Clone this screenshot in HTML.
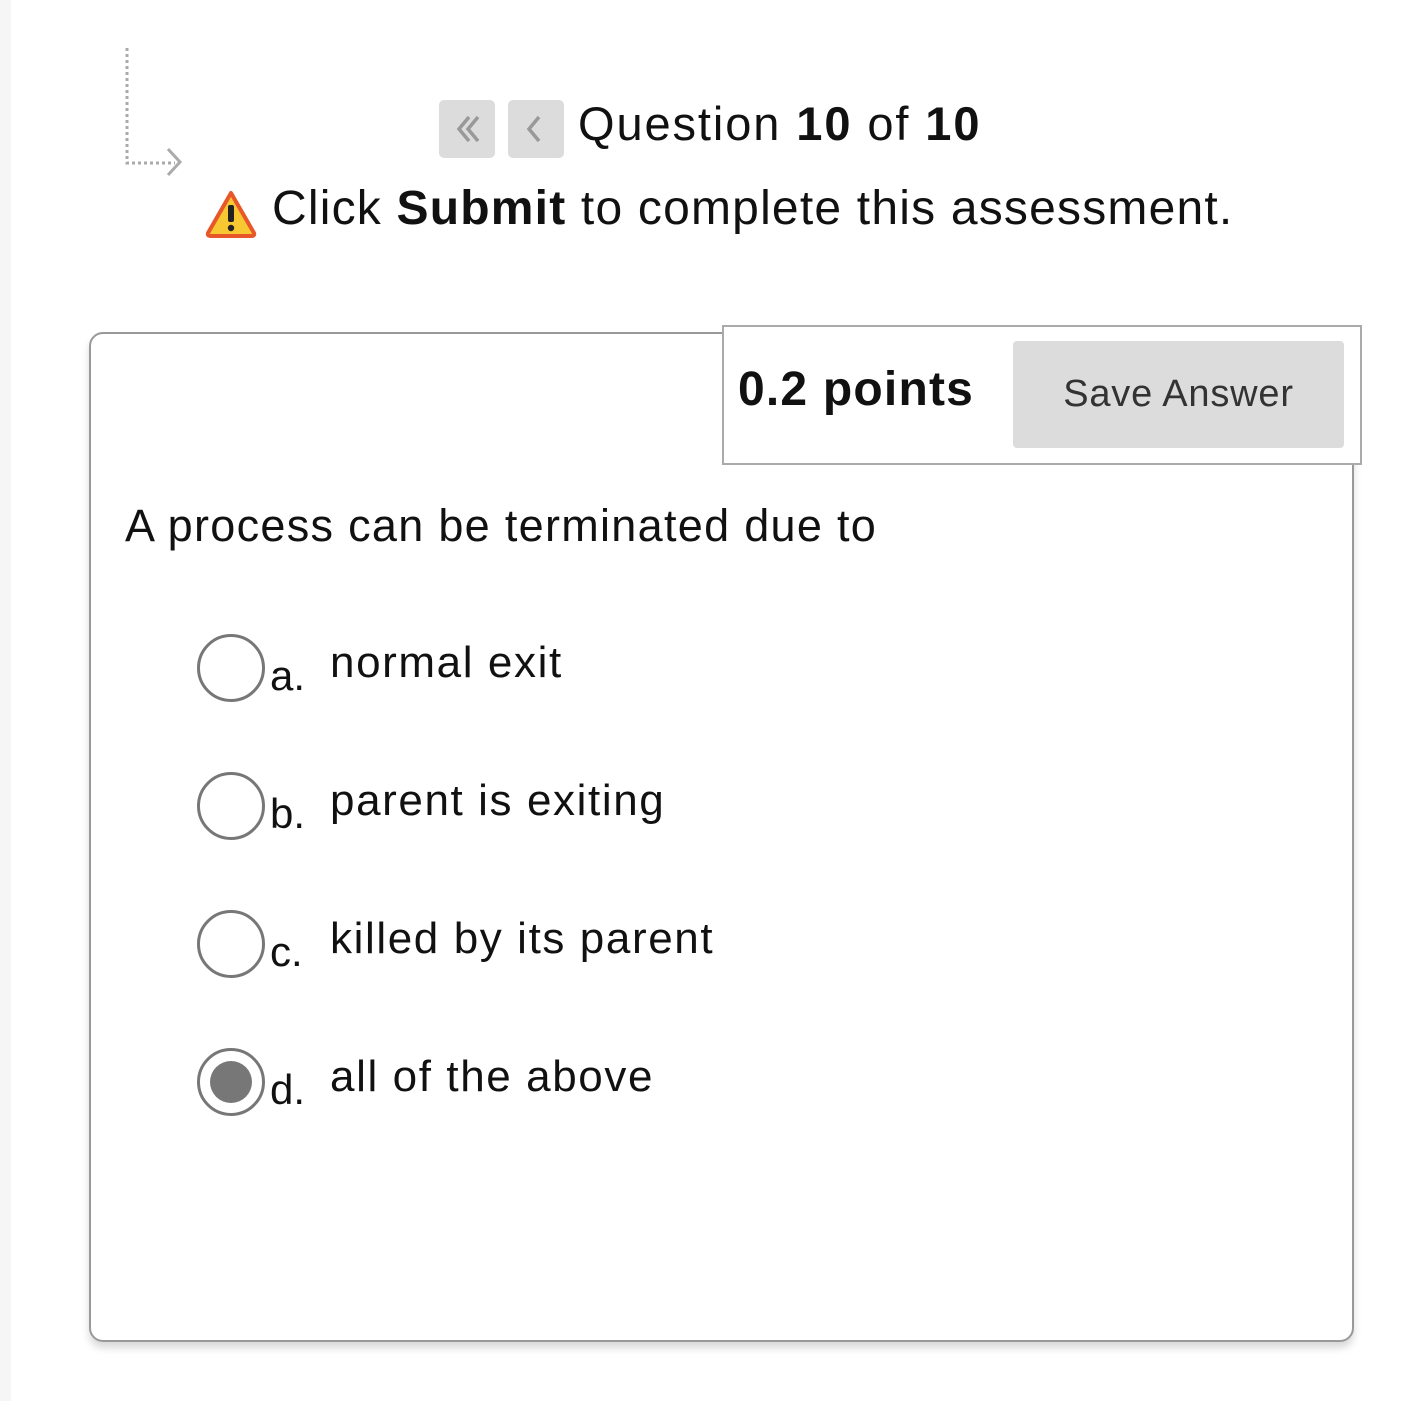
<!DOCTYPE html>
<html><head><style>
body{margin:0;width:1418px;height:1401px;background:#fff;position:relative;overflow:hidden;font-family:"Liberation Sans",sans-serif;color:#111}
.a{position:absolute;white-space:nowrap}
.strip{left:0;top:0;width:11px;height:1401px;background:#f6f6f6}
.nb{width:56px;height:58px;background:#dcdcdc;border-radius:5px;top:100px}
.card{left:89px;top:332px;width:1261px;height:1006px;border:2px solid #999;border-radius:14px;box-shadow:0 6px 8px rgba(0,0,0,0.15)}
.pts{left:722px;top:325px;width:636px;height:136px;border:2px solid #aaa;background:#fff}
.btn{left:1013px;top:341px;width:331px;height:107px;background:#dcdcdc;border-radius:4px;font-size:38px;color:#333;text-align:center;line-height:107px;letter-spacing:0.8px}
.r{width:62px;height:62px;border:3px solid #777;border-radius:50%;left:197px}
.lt{font-size:42px;left:270px}
.ot{font-size:44px;left:330px;letter-spacing:1.6px}
</style></head><body>
<div class="a strip"></div>
<svg class="a" style="left:120px;top:45px" width="65" height="140"><path d="M7 3V118H55" stroke="#aaa" stroke-width="3" stroke-dasharray="3 3" fill="none"/><path d="M48 104L60 117L48 130" stroke="#aaa" stroke-width="3" fill="none"/></svg>
<div class="a nb" style="left:439px"></div>
<div class="a nb" style="left:508px"></div>
<svg class="a" style="left:439px;top:100px" width="125" height="58"><path d="M30 17L20 29L30 41M39 17L29 29L39 41" stroke="#999" stroke-width="3.5" fill="none"/><path d="M100 17L90 29L100 41" stroke="#999" stroke-width="3.5" fill="none"/></svg>
<div class="a" style="left:578px;top:96px;font-size:47px;letter-spacing:1.9px">Question <b>10</b> of <b>10</b></div>
<svg class="a" style="left:204px;top:188px" width="54" height="52"><path d="M27 5L50 45Q51 48 47 48H7Q3 48 4 45Z" fill="#f8c832" stroke="#e8572a" stroke-width="4" stroke-linejoin="round"/><rect x="24" y="17" width="6" height="17" rx="2" fill="#222"/><circle cx="27" cy="40" r="3.2" fill="#222"/></svg>
<div class="a" style="left:272px;top:181px;font-size:48px;letter-spacing:1.2px">Click <b>Submit</b> to complete this assessment.</div>
<div class="a card"></div>
<div class="a pts"></div>
<div class="a" style="left:738px;top:362px;font-size:48px;font-weight:bold;letter-spacing:1.2px">0.2 points</div>
<div class="a btn">Save Answer</div>
<div class="a" style="left:125px;top:500px;font-size:45px;letter-spacing:1.3px">A process can be terminated due to</div>
<div class="a r" style="top:634px"></div><div class="a lt" style="top:652px">a.</div><div class="a ot" style="top:638px">normal exit</div>
<div class="a r" style="top:772px"></div><div class="a lt" style="top:790px">b.</div><div class="a ot" style="top:776px">parent is exiting</div>
<div class="a r" style="top:910px"></div><div class="a lt" style="top:928px">c.</div><div class="a ot" style="top:914px">killed by its parent</div>
<div class="a r" style="top:1048px"></div><div class="a" style="left:210px;top:1061px;width:42px;height:42px;border-radius:50%;background:#777"></div><div class="a lt" style="top:1066px">d.</div><div class="a ot" style="top:1052px">all of the above</div>
</body></html>
